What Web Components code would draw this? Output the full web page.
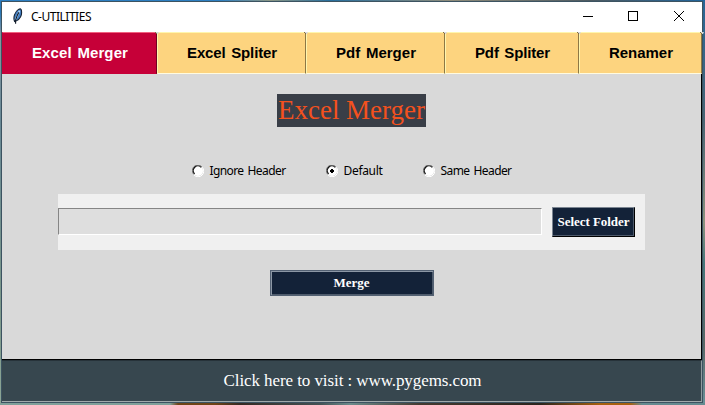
<!DOCTYPE html>
<html lang="en"><head><meta charset="utf-8"><title>C-UTILITIES</title>
<style>html,body{margin:0;width:705px;height:405px;overflow:hidden}</style></head>
<body><utility-window></utility-window>
<script>
function define(name, html, after) {
  customElements.define(name, class extends HTMLElement {
    connectedCallback() {
      if (this.shadowRoot) return;
      const t = document.createElement('template');
      t.innerHTML = html;
      this.attachShadow({mode: 'open'}).append(t.content.cloneNode(true));
      if (after) after(this, this.shadowRoot);
    }
  });
}

// A single line whose letter spacing is tuned to a given advance width.
define('fit-text', `<style>:host{display:block;white-space:pre;flex:none}span{display:inline-block}</style><span><slot></slot></span>`,
  (el, root) => {
    const s = root.querySelector('span'), w = +el.getAttribute('w');
    s.style.letterSpacing = ((w - s.getBoundingClientRect().width) / el.textContent.length) + 'px';
    el.style.width = w + 'px';
  });

define('title-bar', `<style>
:host{display:flex;height:30px;background:#fff;color:#000;font:12px/30px "Noto Sans","Open Sans",sans-serif}
.feather{width:14px;height:17px;margin:6px 6px 0 9px;flex:none}
.controls{width:138px;height:30px;margin:0 1px 0 auto;flex:none}
</style>
<svg class="feather" viewBox="0 0 14 17"><path d="M3.6 13.5C1.8 9.5 3.8 3.8 7.5 1.4Q10.3-.2 10.4 2.7C11.3 6.8 9 11.6 5.4 12.7Z" fill="#437fc4" stroke="#172536" stroke-width="1.1"/><path d="M4.4 11.8L8.6 2.6" stroke="#b7daf5" stroke-width="1.6"/><path d="M7.8 4.4C6 7.2 5.3 9.7 4.6 12.1V15.8" fill="none" stroke="#111a27" stroke-width="1.1"/></svg>
<fit-text w="60">C-UTILITIES</fit-text>
<svg class="controls" viewBox="0 0 138 30" fill="none" stroke="#000"><path d="M20 14.5H30"/><rect x="65.5" y="9.5" width="9" height="9"/><path d="M111 9L121 19M121 9L111 19"/></svg>`);

define('tab-button', `<style>
:host{display:grid;place-content:center;box-sizing:border-box;position:relative;height:42px;padding-left:1px;background:#fdd47f;color:#000;border:1px solid #fff6ae;border-right-color:#8d7845;border-bottom-color:#fffbe0;font:bold 15px/40px "Liberation Sans",sans-serif;word-spacing:1.5px;flex:none}
:host([active]){background:#c60038;color:#fff;border-color:#f1607f #710020 #c60038 #c60038}
.notch{position:absolute;right:-3px;top:-1px;width:4px;height:2px;z-index:1}
</style><slot></slot><svg class="notch" viewBox="0 0 4 2"><path d="M0 0H4L3 2H2Z" fill="#d9d9d9"/><path d="M0 .5H1M1 1.5H2" stroke="#806d43"/></svg>`,
  (el) => { el.style.width = el.getAttribute('size') + 'px'; });

define('radio-option', `<style>
:host{display:flex;align-items:center;height:18px;color:#000;font:12px/18px "Noto Sans","Open Sans",sans-serif;word-spacing:1.5px}
svg{width:12px;height:12px;margin-right:6px;flex:none}.dot{display:none}:host([checked]) .dot{display:block}
</style><svg viewBox="0 0 12 12"><circle cx="6" cy="6" r="5" fill="#fff"/><path d="M1.8 9.4A5.4 5.4 0 0 1 9.8 1.8" fill="none" stroke="#777"/><path d="M2.6 8.8A4.5 4.5 0 0 1 9.2 2.4" fill="none" stroke="#111" stroke-width="1.2"/><path d="M2 10A5.5 5.5 0 0 0 10.2 2.2" fill="none" stroke="#fff"/><path class="dot" d="M5 4H7V5H8V7H7V8H5V7H4V5H5Z" fill="#000"/></svg><slot></slot>`);

define('action-button', `<style>
:host{display:grid;place-content:center;box-sizing:border-box;background:#132238;color:#fff;font:bold 13px/16px "Liberation Serif",serif;flex:none}
:host([kind=folder]){width:83px;height:30px;border:1px solid #7b8591;border-right-color:#000;border-bottom-color:#000;box-shadow:inset -1px -1px #4d596a}
:host([kind=merge]){width:164px;height:26px;border:1px solid #536173;box-shadow:inset 1px 1px #8c97a5,inset -1px -1px #4e5b6c}
</style><slot></slot>`);

define('path-row', `<style>
:host{display:flex;align-items:center;gap:10px;box-sizing:border-box;width:587px;height:56px;background:#f0f0f0}
.entry{box-sizing:border-box;width:484px;height:27px;margin-bottom:1px;background:#dedede;border:1px solid #858585;border-right-color:#fff;border-bottom-color:#fff;flex:none}
</style><div class="entry"></div><action-button kind="folder"><fit-text w="72">Select Folder</fit-text></action-button>`);

define('utility-window', `<style>
:host{display:block;box-sizing:border-box;width:705px;height:405px;padding:1px 2px 2px 1px;background:
linear-gradient(90deg,#2d7fc1 0 80px,#2d7fc1 220px,#8b9684 270px,#286f9e 330px,#8e8c7b 450px,#4d5a61 590px,#20659c 705px) 0 0/705px 1px no-repeat,
linear-gradient(90deg,#7fa09a 0 170px,#6f4417 178px 215px,#352a23 240px,#435254 320px,#6b8b8b 350px,#443a30 420px,#2b241d 540px,#a6600f 600px,#a6600f 630px,#658b90 642px) 0 403px/705px 2px no-repeat,
linear-gradient(#2877b7 0 12px,#8797a0 35px,#688895 120px,#7c988a 300px,#8ba595) 0 0/2px 405px no-repeat,
linear-gradient(#296696 0,#4a6573 30%,#8c927e 55%,#46777b 65%,#596867 85%,#699097)}
.window{box-sizing:border-box;display:flex;flex-direction:column;width:702px;height:402px;border:1px solid #3c5361}
.tabs{display:flex;height:42px;flex:none}
main{box-sizing:border-box;display:flex;flex-direction:column;align-items:center;height:286px;background:#d9d9d9;border-right:1px solid #000;border-bottom:1px solid #000;flex:none}
h1{box-sizing:border-box;width:149px;height:33px;margin:20px 0 0 0;padding-left:1px;background:#393e47;color:#f4511e;font:27px/32px "Liberation Serif",serif}
.radios{display:flex;width:320px;margin:35px 0 14px;gap:40px}
action-button[kind=merge]{margin-top:20px}
footer{display:flex;justify-content:center;box-sizing:border-box;height:42px;padding-left:2px;background:#37474f;color:#fff;border-top:1px solid #27333a;border-right:1px solid #8f9b9e;border-bottom:1px solid #a0a9ab;font:17px/40px "Liberation Serif",serif}
</style>
<div class="window"><title-bar></title-bar>
<nav class="tabs">
<tab-button size="155" active><fit-text w="96">Excel Merger</fit-text></tab-button>
<tab-button size="149"><fit-text w="90">Excel Spliter</fit-text></tab-button>
<tab-button size="139"><fit-text w="80">Pdf Merger</fit-text></tab-button>
<tab-button size="134"><fit-text w="75">Pdf Spliter</fit-text></tab-button>
<tab-button size="123"><fit-text w="64">Renamer</fit-text></tab-button></nav>
<main><h1><fit-text w="147">Excel Merger</fit-text></h1>
<div class="radios"><radio-option><fit-text w="76">Ignore Header</fit-text></radio-option><radio-option checked><fit-text w="39">Default</fit-text></radio-option><radio-option><fit-text w="71">Same Header</fit-text></radio-option></div>
<path-row></path-row><action-button kind="merge"><fit-text w="36">Merge</fit-text></action-button></main>
<footer><fit-text w="258">Click here to visit : www.pygems.com</fit-text></footer></div>`);
</script></body></html>
